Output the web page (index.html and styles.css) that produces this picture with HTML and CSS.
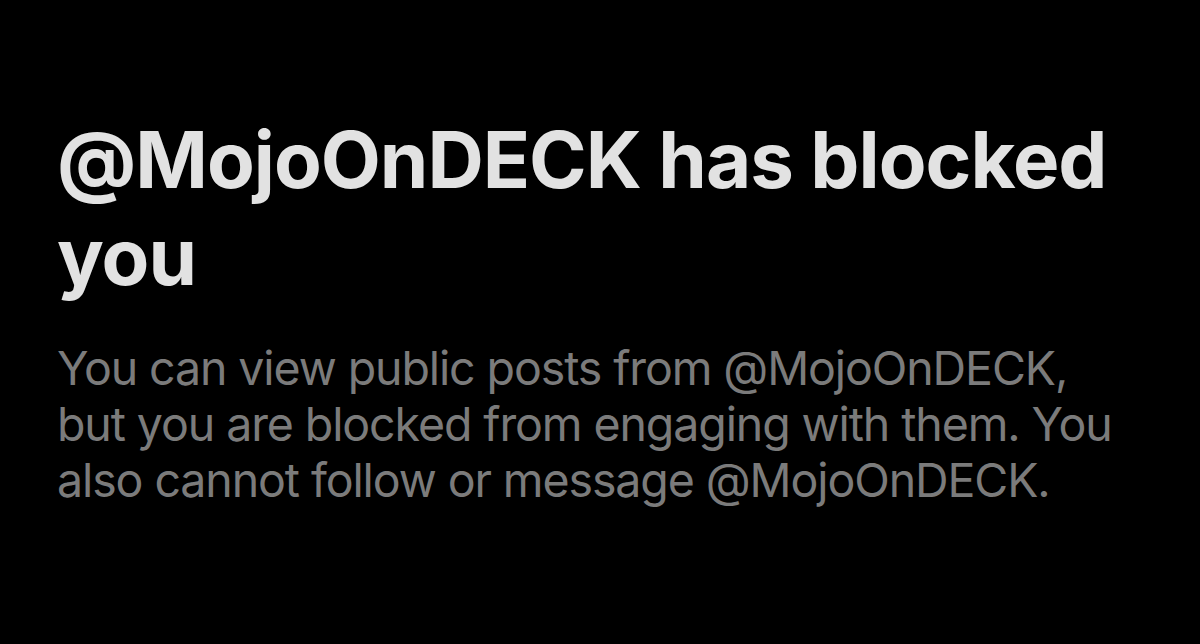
FILE: index.html
```html
<!DOCTYPE html>
<html lang="en">
<head>
<meta charset="utf-8">
<link rel="stylesheet" href="styles.css">
<title>Blocked</title>
</head>
<body>
<main class="notice">
  <h1 class="notice-title">@MojoOnDECK has blocked you</h1>
  <p class="notice-text">You can view public posts from @MojoOnDECK, but you are blocked from engaging with them. You also cannot follow or message @MojoOnDECK.</p>
</main>
</body>
</html>
```
FILE: styles.css
```css
html, body {
  margin: 0;
  padding: 0;
  background: #000;
  height: 100%;
}
.notice {
  padding: 111px 0 0 57px;
  width: 1137px;
  box-sizing: border-box;
}
.notice-title {
  margin: 0;
  font-family: Inter, "Noto Sans", sans-serif;
  font-weight: 700;
  font-size: 78px;
  line-height: 97px;
  letter-spacing: -1px;
  color: #e2e2e2;
}
.notice-text {
  margin: 35px 0 0;
  font-family: Inter, "Noto Sans", sans-serif;
  font-weight: 400;
  font-size: 46.5px;
  line-height: 56px;
  letter-spacing: -1.1px;
  color: #7b7b7b;
}
```
